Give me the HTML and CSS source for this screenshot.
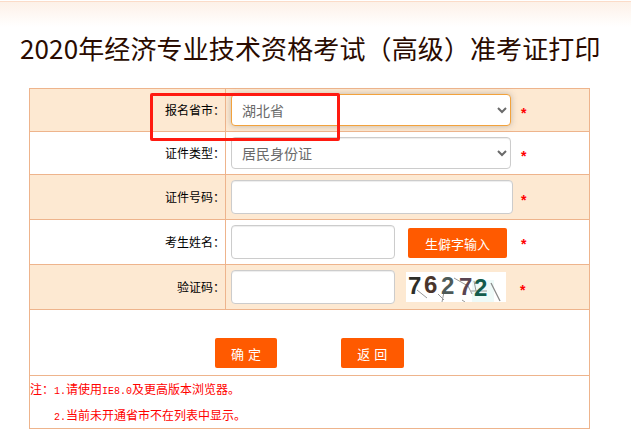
FILE: index.html
```html
<!DOCTYPE html>
<html lang="zh-CN">
<head>
<meta charset="utf-8">
<title>2020年经济专业技术资格考试（高级）准考证打印</title>
<link rel="stylesheet" href="styles.css">
</head>
<body>
<div class="top-band"></div>
<h1 class="title">2020年经济专业技术资格考试（高级）准考证打印</h1>
<table class="form">
  <tr class="row row-a h43">
    <th>报名省市：</th>
    <td><div class="field">
      <select class="ctl sel focus"><option>湖北省</option></select>
      <span class="star s-sel">*</span>
    </div></td>
  </tr>
  <tr class="row h43">
    <th>证件类型：</th>
    <td><div class="field">
      <select class="ctl sel"><option>居民身份证</option></select>
      <span class="star s-sel">*</span>
    </div></td>
  </tr>
  <tr class="row row-a h45">
    <th>证件号码：</th>
    <td><div class="field">
      <input class="ctl long" type="text">
      <span class="star s-long">*</span>
    </div></td>
  </tr>
  <tr class="row h45">
    <th>考生姓名：</th>
    <td><div class="field">
      <input class="ctl short" type="text">
      <button class="btn btn-rare" type="button">生僻字输入</button>
      <span class="star s-rare">*</span>
    </div></td>
  </tr>
  <tr class="row row-a h45">
    <th>验证码：</th>
    <td><div class="field">
      <input class="ctl short" type="text">
      <svg class="captcha" width="100" height="30" viewBox="0 0 100 30">
        <rect width="100" height="30" fill="#fff"/>
        <rect x="66" y="8" width="22" height="22" fill="#eefaf8"/>
        <g fill="none" stroke="#999" stroke-width="1">
          <path d="M11 18l10 8"/>
          <path d="M32 22l6 6M36 30l2-10"/>
          <path d="M48 6l14 8 4 8M56 28l3 2"/>
          <path d="M65 19h16M68 9l2 10"/>
          <path d="M85 11l9 18" stroke="#888" stroke-width="1.2"/>
        </g>
        <text class="cap d1" x="2" y="22">7</text>
        <text class="cap d2" x="18" y="21">6</text>
        <text class="cap d3" x="35" y="22">2</text>
        <text class="cap d4" x="53" y="23">7</text>
        <text class="cap d5" x="68" y="24">2</text>
      </svg>
      <span class="star s-cap">*</span>
    </div></td>
  </tr>
  <tr class="h66">
    <td colspan="2" class="actions">
      <button class="btn btn-ok" type="button">确 定</button>
      <button class="btn btn-back" type="button">返 回</button>
    </td>
  </tr>
  <tr class="h53">
    <td colspan="2" class="notes">
      <p>注：<span class="lat">1.</span>请使用<span class="lat">IE8.0</span>及更高版本浏览器。</p>
      <p class="indent"><span class="lat">2.</span>当前未开通省市不在列表中显示。</p>
    </td>
  </tr>
</table>
<div class="annotation"></div>
</body>
</html>
```
FILE: styles.css
```css
* { box-sizing: border-box; }
html, body { margin: 0; padding: 0; height: 445px; overflow: hidden; background: #fff; }
body {
  position: relative;
  font-family: "Noto Sans CJK SC", "Liberation Sans", sans-serif;
  font-size: 12px;
  color: #000;
}
.top-band {
  height: 26px;
  border-top: 1px solid #fbdcc9;
  margin-top: 1px;
  background: linear-gradient(#fdf1e8, #fff);
}
.title {
  margin: 0 0 0 20px;
  height: 61px;
  padding-top: 2px;
  font-size: 26px;
  line-height: 38px;
  letter-spacing: .12px;
  font-weight: 400;
  color: #2a0b00;
  white-space: nowrap;
}
.form {
  margin-left: 29px;
  width: 561px;
  border-collapse: collapse;
  table-layout: fixed;
  border: 1px solid #eeb48c;
}
.form th, .form td { border: 1px solid #eeb48c; padding: 0; }
.form th {
  width: 196px;
  text-align: right;
  font-weight: 400;
  line-height: 16px;
}
.row-a { background: #fde9d2; }
.h43 { height: 43px; }
.h45 { height: 45px; }
.h66 { height: 66px; }
.h53 { height: 53px; }
.field { display: flex; align-items: center; padding-left: 5px; }
.ctl {
  display: block;
  border: 1px solid #ccc;
  border-radius: 4px;
  background: #fff;
  font-family: "Noto Sans CJK SC", "Liberation Sans", sans-serif;
  font-size: 14px;
  color: #6a6a6a;
  box-shadow: inset 0 1px 1px rgba(0,0,0,.075);
  outline: none;
}
.sel { width: 280px; height: 32px; padding: 0 6px; }
.focus {
  border-color: #f2a23c;
  box-shadow: 0 0 6px rgba(120,120,120,.45);
}
.long { width: 282px; height: 34px; }
.short { width: 164px; height: 34px; }
.star { color: #f00; font-size: 14px; line-height: 14px; font-family: "Liberation Sans", sans-serif; font-weight: 700; position: relative; top: 3px; }
.s-sel { margin-left: 10px; }
.s-long { margin-left: 8px; }
.s-rare { margin-left: 14px; top: 2px; }
.s-cap { margin-left: 14px; }
.btn {
  border: 0;
  border-radius: 2px;
  background: #ff5a00;
  color: #fff;
  font-family: "Noto Sans CJK SC", "Liberation Sans", sans-serif;
  padding: 0;
}
.btn-rare { width: 99px; height: 30px; margin-left: 13px; font-size: 13px; position: relative; top: 1px; }
.captcha { margin-left: 11px; display: block; }
.cap { font-family: "Liberation Sans", sans-serif; font-weight: 700; font-size: 24px; }
.d1 { fill: #2e2e28; }
.d2 { fill: #4a352c; }
.d3 { fill: #4d5a58; }
.d4 { fill: #5a4552; }
.d5 { fill: #135b4b; }
.actions { padding-top: 28px !important; vertical-align: top; }
.actions .btn { display: inline-block; height: 30px; font-size: 13px; word-spacing: 1px; vertical-align: top; }
.btn-ok { width: 62px; margin-left: 185px; }
.btn-back { width: 63px; margin-left: 61px; }
.notes { color: #f00; vertical-align: top; }
.notes p { margin: 0; height: 26px; line-height: 26px; white-space: nowrap; }
.notes .indent { padding-left: 24px; }
.lat { font-family: "Liberation Mono", monospace; font-size: 10px; }
.annotation {
  position: absolute;
  left: 150px;
  top: 93px;
  width: 190px;
  height: 48px;
  border: 3px solid #ff1a10;
  border-radius: 2px;
  pointer-events: none;
}
```
